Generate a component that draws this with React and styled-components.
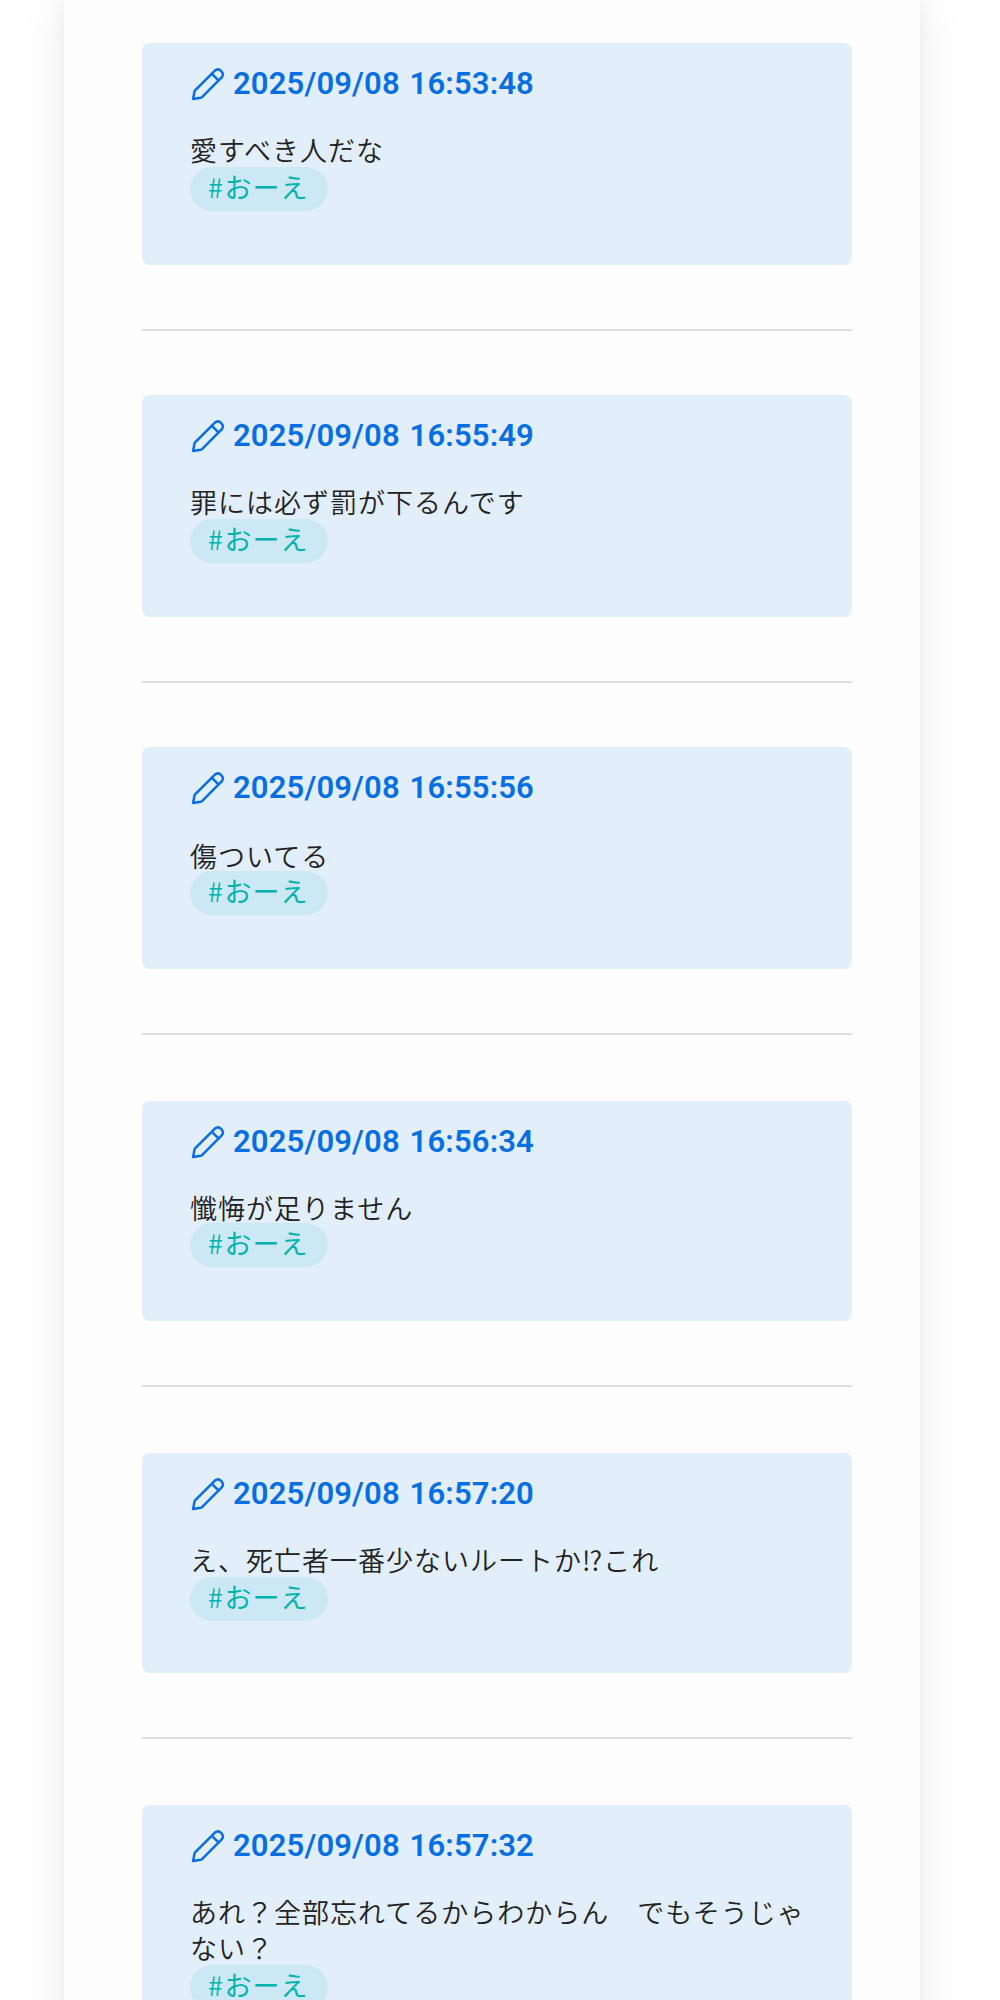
import React from "react";
import styled, { createGlobalStyle } from "styled-components";

const Global = createGlobalStyle`
  html, body { margin: 0; background: #fff; }
  * { box-sizing: border-box; }
`;

const Viewport = styled.div`
  height: 2000px;
  padding: 0 80px 0 64px;
  overflow: clip;
  font-family: "Noto Sans CJK JP", sans-serif;
`;

const Sheet = styled.main`
  padding: 43px 68px 64px 78px;
  background: #fdfdfd;
  box-shadow: 0 0 50px rgba(0, 0, 0, 0.065), 0 0 16px rgba(0, 0, 0, 0.055);
`;

const Card = styled.article`
  height: ${(p) => p.$height}px;
  padding: 15px 34px 0 48px;
  border-radius: 8px;
  background: #e2eefa;
`;

const Heading = styled.h2`
  display: flex;
  align-items: center;
  height: 50px;
  margin: 0;
  color: #086fe3;
  font-family: Roboto, "Noto Sans CJK JP", sans-serif;
  font-size: 31px;
  font-weight: 600;
  line-height: 50px;
  letter-spacing: 0.15px;
  word-spacing: 2px;
  white-space: nowrap;
`;

const Timestamp = styled.span`
  padding-top: 2px;
`;

const PencilIcon = styled.svg`
  flex: none;
  width: 36px;
  height: 36px;
  margin: 2px 7px 0 0;
`;

const Message = styled.p`
  margin: ${(p) => 24 + p.$drop}px 0 ${(p) => -1 - p.$drop}px;
  color: #222;
  font-size: 27px;
  font-weight: 350;
  line-height: 36px;
  letter-spacing: 1px;
`;

const Tag = styled.span`
  display: block;
  width: 138px;
  height: 44px;
  margin-top: ${(p) => p.$offset}px;
  padding-left: 18px;
  border-radius: 22px;
  background: #cce8f4;
  color: #03b3ae;
  font-size: 27px;
  font-weight: 400;
  line-height: 40px;
  letter-spacing: 1px;
  white-space: nowrap;
`;

const Hash = styled.span`
  font-weight: 350;
  letter-spacing: 1.6px;
`;

const Divider = styled.hr`
  height: 2px;
  margin: 64px 0 ${(p) => p.$below}px;
  border: 0;
  background: #dfdfdf;
`;

const posts = [
  { time: "2025/09/08 16:53:48", text: "愛すべき人だな", height: 222, below: 64 },
  { time: "2025/09/08 16:55:49", text: "罪には必ず罰が下るんです", height: 222, below: 64 },
  { time: "2025/09/08 16:55:56", text: "傷ついてる", height: 222, below: 66, drop: 2 },
  { time: "2025/09/08 16:56:34", text: "懺悔が足りません", height: 220, below: 66, offset: -3 },
  { time: "2025/09/08 16:57:20", text: "え、死亡者一番少ないルートか⁉これ", height: 220, below: 66 },
  { time: "2025/09/08 16:57:32", text: "あれ？全部忘れてるからわからん　でもそうじゃない？", height: 258 },
];

function Pencil() {
  return (
    <PencilIcon viewBox="0 0 36 36" fill="none" stroke="currentColor" strokeWidth="2.5" strokeLinejoin="round" strokeLinecap="round">
      <path d="M3.1 33 4.5 25.6Q4.8 24.6 5.6 23.8L24.9 4.6a4.85 4.85 0 0 1 6.8 6.8L12.5 30.7Q11.7 31.4 10.7 31.7Z" />
      <path d="m21.9 7.8 6.6 6.6" />
    </PencilIcon>
  );
}

function Post({ post }) {
  return (
    <Card $height={post.height}>
      <Heading><Pencil /><Timestamp>{post.time}</Timestamp></Heading>
      <Message $drop={post.drop || 0}>{post.text}</Message>
      <Tag $offset={post.offset || 0}><Hash>#</Hash>おーえ</Tag>
    </Card>
  );
}

export default function App() {
  return (
    <Viewport>
      <Global />
      <Sheet>
        {posts.map((post) => (
          <React.Fragment key={post.time}>
            <Post post={post} />
            {post.below && <Divider $below={post.below} />}
          </React.Fragment>
        ))}
      </Sheet>
    </Viewport>
  );
}
